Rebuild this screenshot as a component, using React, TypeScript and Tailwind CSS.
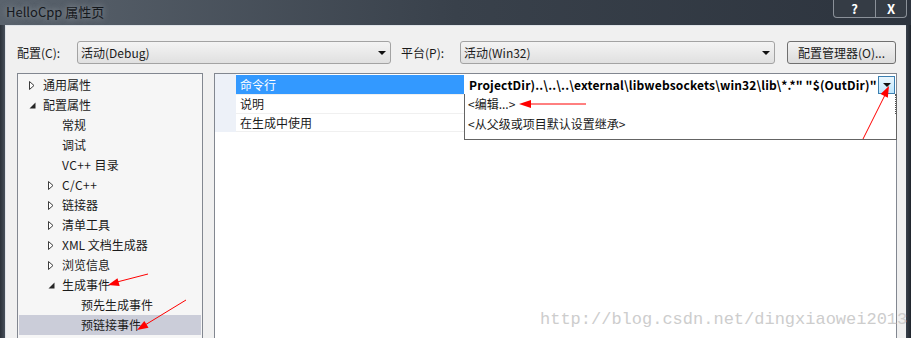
type TreeItem = {
  label: string;
  level: 0 | 1 | 2;
  arrow?: 'closed' | 'open';
  selected?: boolean;
};

const tree: TreeItem[] = [
  { label: '通用属性', level: 0, arrow: 'closed' },
  { label: '配置属性', level: 0, arrow: 'open' },
  { label: '常规', level: 1 },
  { label: '调试', level: 1 },
  { label: 'VC++ 目录', level: 1 },
  { label: 'C/C++', level: 1, arrow: 'closed' },
  { label: '链接器', level: 1, arrow: 'closed' },
  { label: '清单工具', level: 1, arrow: 'closed' },
  { label: 'XML 文档生成器', level: 1, arrow: 'closed' },
  { label: '浏览信息', level: 1, arrow: 'closed' },
  { label: '生成事件', level: 1, arrow: 'open' },
  { label: '预先生成事件', level: 2 },
  { label: '预链接事件', level: 2, selected: true },
];

const indent = ['pl-[10px]', 'pl-[29px]', 'pl-[48px]'];

function Arrow({ kind }: { kind?: 'closed' | 'open' }) {
  return (
    <span className="flex w-[14px] shrink-0 items-center">
      {kind === 'closed' && (
        <svg width="6" height="9" viewBox="0 0 6 9">
          <path d="M0.5 0.5 L5 4.5 L0.5 8.5 Z" fill="#fff" stroke="#3c3c3c" strokeWidth="1" />
        </svg>
      )}
      {kind === 'open' && (
        <svg width="7" height="7" viewBox="0 0 7 7">
          <path d="M6.5 0.5 L6.5 6.5 L0.5 6.5 Z" fill="#262626" />
        </svg>
      )}
    </span>
  );
}

function ComboArrow() {
  return (
    <svg width="8" height="4" viewBox="0 0 8 4">
      <path d="M0 0 L8 0 L4 4 Z" fill="#111" />
    </svg>
  );
}

function Combo({ text, w }: { text: string; w: string }) {
  return (
    <div
      className={`${w} flex h-[23px] items-center justify-between rounded-[3px] border border-[#a3a3a3] bg-linear-to-b from-[#f4f4f4] to-[#e0e0e0] pl-[3px] pr-[4px]`}
    >
      <span>{text}</span>
      <ComboArrow />
    </div>
  );
}

export default function App() {
  return (
    <div className="relative h-[338px] w-[911px] overflow-hidden bg-[#2f3640] font-['Noto_Sans_CJK_SC',sans-serif] text-[12px] text-[#1b1b1b]">
      {/* title bar */}
      <div className="flex h-[25px] items-start justify-between bg-linear-to-r from-[#5a636d] via-[#39414b] to-[#2d343e]">
        <span className="mt-[2px] pl-[6px] text-[13px] text-[#15181c] [text-shadow:0_0_6px_rgba(220,225,230,0.55)]">
          HelloCpp 属性页
        </span>
        <div className="mr-[4px] flex h-[18px]">
          <div className="flex w-[43px] items-center justify-center rounded-bl-[4px] border border-t-0 border-[#8b9199] bg-[#353c45] text-[13px] font-bold text-white">
            ?
          </div>
          <div className="flex w-[31px] items-center justify-center rounded-br-[4px] border border-l-0 border-t-0 border-[#8b9199] bg-[#353c45] text-[13px] font-bold text-white">
            X
          </div>
        </div>
      </div>

      <div className="flex">
        <div className="w-[5px] shrink-0 bg-linear-to-r from-[#2b3139] to-[#48505a]" />
        <div className="h-[313px] w-[901px] border-l border-t border-[#dfe3e8] bg-[#f0f0f0]">
          {/* config row */}
          <div className="mt-[15px] flex items-center pl-[11px]">
            <span className="w-[60px]">配置(C):</span>
            <Combo text="活动(Debug)" w="w-[314px]" />
            <span className="ml-[10px] w-[59px]">平台(P):</span>
            <Combo text="活动(Win32)" w="w-[315px]" />
            <div className="ml-[12px] flex h-[23px] w-[109px] items-center justify-center rounded-[3px] border border-[#707070] bg-linear-to-b from-[#f3f3f3] to-[#dcdcdc]">
              配置管理器(O)...
            </div>
          </div>

          {/* panels */}
          <div className="mt-[9px] flex pl-[11px]">
            <div className="h-[270px] w-[186px] border border-[#828790] bg-[#f6f6f6] pt-[1px]">
              {tree.map((it) => (
                <div
                  key={it.label}
                  className={`mx-[1px] flex h-[20px] items-center ${indent[it.level]} ${
                    it.selected ? 'bg-[#cbcdd9]' : ''
                  }`}
                >
                  {it.level < 2 && <Arrow kind={it.arrow} />}
                  {it.level === 2 && <span className="w-[14px] shrink-0" />}
                  <span className={it.label.includes('+') ? 'tracking-[0.4px]' : ''}>{it.label}</span>
                </div>
              ))}
            </div>

            <div className="relative ml-[11px] h-[270px] w-[683px] border border-[#828790] bg-white">
              <div className="flex">
                <div className="w-[21px] shrink-0 bg-[#edf1f8]" />
                <div className="flex-1 pt-[1px]">
                  <div className="flex h-[19px]">
                    <div className="flex w-[228px] shrink-0 items-center bg-[#3399ff] pl-[4px] text-white">命令行</div>
                    <div className="flex min-w-0 flex-1 items-center justify-between pl-[5px] pr-[1px]">
                      <span className="min-w-0 overflow-hidden whitespace-nowrap font-bold tracking-[0.16px] text-black">
                        {'ProjectDir)..\\..\\..\\external\\libwebsockets\\win32\\lib\\*.*" "$(OutDir)"'}
                      </span>
                      <div className="flex h-[18px] w-[17px] shrink-0 items-center justify-center border border-[#3c7fb1] bg-linear-to-b from-[#eaf6fd] to-[#bee6fd]">
                        <ComboArrow />
                      </div>
                    </div>
                  </div>
                  <div className="flex h-[19px] border-t border-[#f0f0f0]">
                    <div className="flex w-[228px] items-center pl-[4px]">说明</div>
                    <div className="flex-1 border-l border-[#f0f0f0]" />
                  </div>
                  <div className="flex h-[19px] border-y border-[#f0f0f0]">
                    <div className="flex w-[228px] items-center pl-[4px]">在生成中使用</div>
                    <div className="flex-1 border-l border-[#f0f0f0]" />
                  </div>
                </div>
              </div>

              {/* open dropdown list */}
              <div className="absolute left-[249px] top-[20px] h-[46px] w-[433px] border border-t-0 border-[#646464] bg-white">
                <div className="flex h-[20px] items-center border-r border-dotted border-[#555] pl-[3px]">&lt;编辑...&gt;</div>
                <div className="flex h-[19px] items-center pl-[3px]">&lt;从父级或项目默认设置继承&gt;</div>
              </div>
            </div>
          </div>
        </div>
        <div className="w-[5px] shrink-0 bg-linear-to-r from-[#3a424c] to-[#1f252c]" />
      </div>

      {/* watermark */}
      <div className="pointer-events-none absolute left-[540px] top-[309px] font-['Liberation_Mono',monospace] text-[17px] leading-[22px] text-[#cdcdcd]">
        http://blog.csdn.net/dingxiaowei2013
      </div>

      {/* red annotation arrows */}
      <svg className="pointer-events-none absolute left-0 top-0" width="911" height="338" viewBox="0 0 911 338">
        <g stroke="#ff0000" strokeWidth="1" fill="none">
          <line x1="530" y1="104" x2="586" y2="104" />
          <line x1="863" y1="139" x2="885" y2="95" />
          <line x1="148" y1="274" x2="117" y2="282" />
          <line x1="186" y1="300" x2="145" y2="325" />
        </g>
        <g fill="#ff0000">
          <polygon points="519,104 531,100 531,108" />
          <polygon points="889,86 887.8,97.7 880.6,94.1" />
          <polygon points="108,285 119.7,286 117.5,278.2" />
          <polygon points="137,330 148.5,327.7 144.3,320.9" />
        </g>
      </svg>
    </div>
  );
}
